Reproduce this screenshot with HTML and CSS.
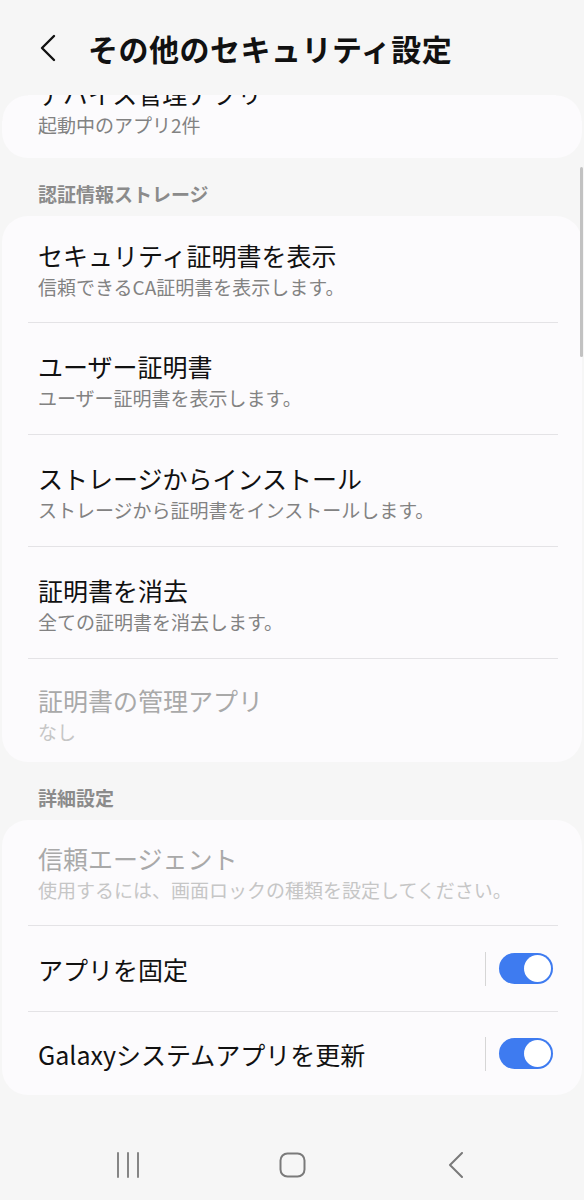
FILE: index.html
```html
<!DOCTYPE html>
<html lang="ja">
<head>
    <meta charset="UTF-8">
    <meta name="viewport" content="width=device-width, initial-scale=1.0">
    <title>その他のセキュリティ設定</title>
    <link rel="stylesheet" href="styles.css">
</head>
<body>
    <header class="topbar">
        <svg class="back" width="18" height="28" viewBox="0 0 18 28">
            <path d="M15 2 L3 14 L15 26" fill="none" stroke="#111" stroke-width="2.4" stroke-linecap="round" stroke-linejoin="round"/>
        </svg>
        <h1>その他のセキュリティ設定</h1>
    </header>

    <main class="content">
        <div class="scrollbar"></div>

        <section class="card card-top">
            <div class="item first last">
                <div class="title">デバイス管理アプリ</div>
                <div class="sub">起動中のアプリ2件</div>
            </div>
        </section>

        <h2 class="section">認証情報ストレージ</h2>
        <section class="card">
            <div class="item first">
                <div class="title">セキュリティ証明書を表示</div>
                <div class="sub">信頼できるCA証明書を表示します。</div>
            </div>
            <div class="item">
                <div class="title">ユーザー証明書</div>
                <div class="sub">ユーザー証明書を表示します。</div>
            </div>
            <div class="item">
                <div class="title">ストレージからインストール</div>
                <div class="sub">ストレージから証明書をインストールします。</div>
            </div>
            <div class="item">
                <div class="title">証明書を消去</div>
                <div class="sub">全ての証明書を消去します。</div>
            </div>
            <div class="item last disabled">
                <div class="title">証明書の管理アプリ</div>
                <div class="sub">なし</div>
            </div>
        </section>

        <h2 class="section">詳細設定</h2>
        <section class="card">
            <div class="item first disabled">
                <div class="title">信頼エージェント</div>
                <div class="sub">使用するには、画面ロックの種類を設定してください。</div>
            </div>
            <div class="item toggle-row">
                <div class="title">アプリを固定</div>
                <span class="sep"></span>
                <span class="switch on"></span>
            </div>
            <div class="item toggle-row last">
                <div class="title">Galaxyシステムアプリを更新</div>
                <span class="sep"></span>
                <span class="switch on"></span>
            </div>
        </section>
    </main>

    <nav class="navbar">
        <div class="nav-slot">
            <svg width="24" height="26" viewBox="0 0 24 26">
                <path d="M2 1 V25 M12 1 V25 M22 1 V25" stroke="#7a7a7a" stroke-width="1.8" stroke-linecap="round"/>
            </svg>
        </div>
        <div class="nav-slot">
            <svg width="27" height="26" viewBox="0 0 27 26">
                <rect x="1.5" y="1.5" width="24" height="23" rx="7" fill="none" stroke="#7a7a7a" stroke-width="2"/>
            </svg>
        </div>
        <div class="nav-slot">
            <svg width="18" height="26" viewBox="0 0 18 26">
                <path d="M15 1 L3 13 L15 25" fill="none" stroke="#7a7a7a" stroke-width="2" stroke-linecap="round" stroke-linejoin="round"/>
            </svg>
        </div>
    </nav>
</body>
</html>
```

FILE: styles.css
```css
/* base */
* {
    box-sizing: border-box;
}
body {
    margin: 0;
    width: 584px;
    height: 1200px;
    overflow: hidden;
    display: flex;
    flex-direction: column;
    background-color: #f6f6f6;
    font-family: "Noto Sans CJK JP", "Noto Sans", sans-serif;
    color: #111;
}

/* header */
.topbar {
    height: 95px;
    flex-shrink: 0;
    display: flex;
    align-items: center;
    padding-left: 39px;
}
.topbar h1 {
    margin: 0 0 0 31px;
    font-size: 30px;
    font-weight: 700;
    line-height: 40px;
    letter-spacing: 0.5px;
    color: #111;
}

/* scroll area */
.content {
    flex: 1;
    position: relative;
    overflow: hidden;
}
/* rounded corners of the list that stay fixed at the top */
.content::before,
.content::after {
    content: "";
    position: absolute;
    top: 0;
    width: 26px;
    height: 26px;
    z-index: 2;
}
.content::before {
    left: 2px;
    background: radial-gradient(circle at 100% 100%, transparent 25px, #f6f6f6 26px);
}
.content::after {
    right: 2px;
    background: radial-gradient(circle at 0 100%, transparent 25px, #f6f6f6 26px);
}
.scrollbar {
    position: absolute;
    right: 1px;
    top: 72px;
    width: 3px;
    height: 190px;
    border-radius: 2px;
    background-color: #c2c2c2;
    z-index: 3;
}

.card {
    margin: 0 2px;
    background-color: #fcfbfd;
    border-radius: 26px;
}
.card-top {
    margin-top: -41px;
}

.section {
    margin: 24px 0 10px 38px;
    font-size: 19px;
    font-weight: 700;
    line-height: 24px;
    color: #8b8b8b;
}

/* list items */
.item {
    position: relative;
    padding: 27px 29px 24px 36px;
}
.item + .item::before {
    content: "";
    position: absolute;
    top: -1px;
    left: 26px;
    right: 24px;
    height: 1px;
    background-color: #e4e3e6;
}
.item + .item {
    margin-top: 1px;
}
.item.first {
    padding-top: 23px;
    padding-bottom: 23px;
}
.item.last {
    padding-top: 25px;
    padding-bottom: 18px;
}
.item.first.last {
    padding-top: 23px;
    padding-bottom: 21px;
}
.title {
    font-size: 25px;
    line-height: 32px;
    color: #111;
}
.sub {
    margin-top: 4px;
    font-size: 19px;
    line-height: 24px;
    color: #828282;
}
.disabled .title {
    color: #a9a9a9;
}
.disabled .sub {
    color: #c6c6c6;
}
.card .item.first.disabled {
    padding-top: 22px;
    padding-bottom: 23px;
}

/* rows with a switch */
.toggle-row {
    display: flex;
    align-items: center;
    height: 85px;
    padding-top: 0;
    padding-bottom: 0;
}
.toggle-row.last {
    height: 83px;
    padding-top: 0;
    padding-bottom: 0;
}
.toggle-row .title {
    flex: 1;
}
.sep {
    width: 1px;
    height: 34px;
    background-color: #d6d6d6;
    margin-right: 13px;
}
.switch {
    position: relative;
    width: 54px;
    height: 31px;
    border-radius: 16px;
    background-color: #3e7bf0;
}
.switch::after {
    content: "";
    position: absolute;
    top: 2px;
    right: 2px;
    width: 27px;
    height: 27px;
    border-radius: 50%;
    background-color: #fff;
}

/* bottom navigation */
.navbar {
    height: 95px;
    flex-shrink: 0;
    display: flex;
    justify-content: center;
    align-items: center;
    padding-top: 24px;
}
.nav-slot {
    width: 164px;
    display: flex;
    justify-content: center;
}
.nav-slot svg {
    display: block;
}
```
